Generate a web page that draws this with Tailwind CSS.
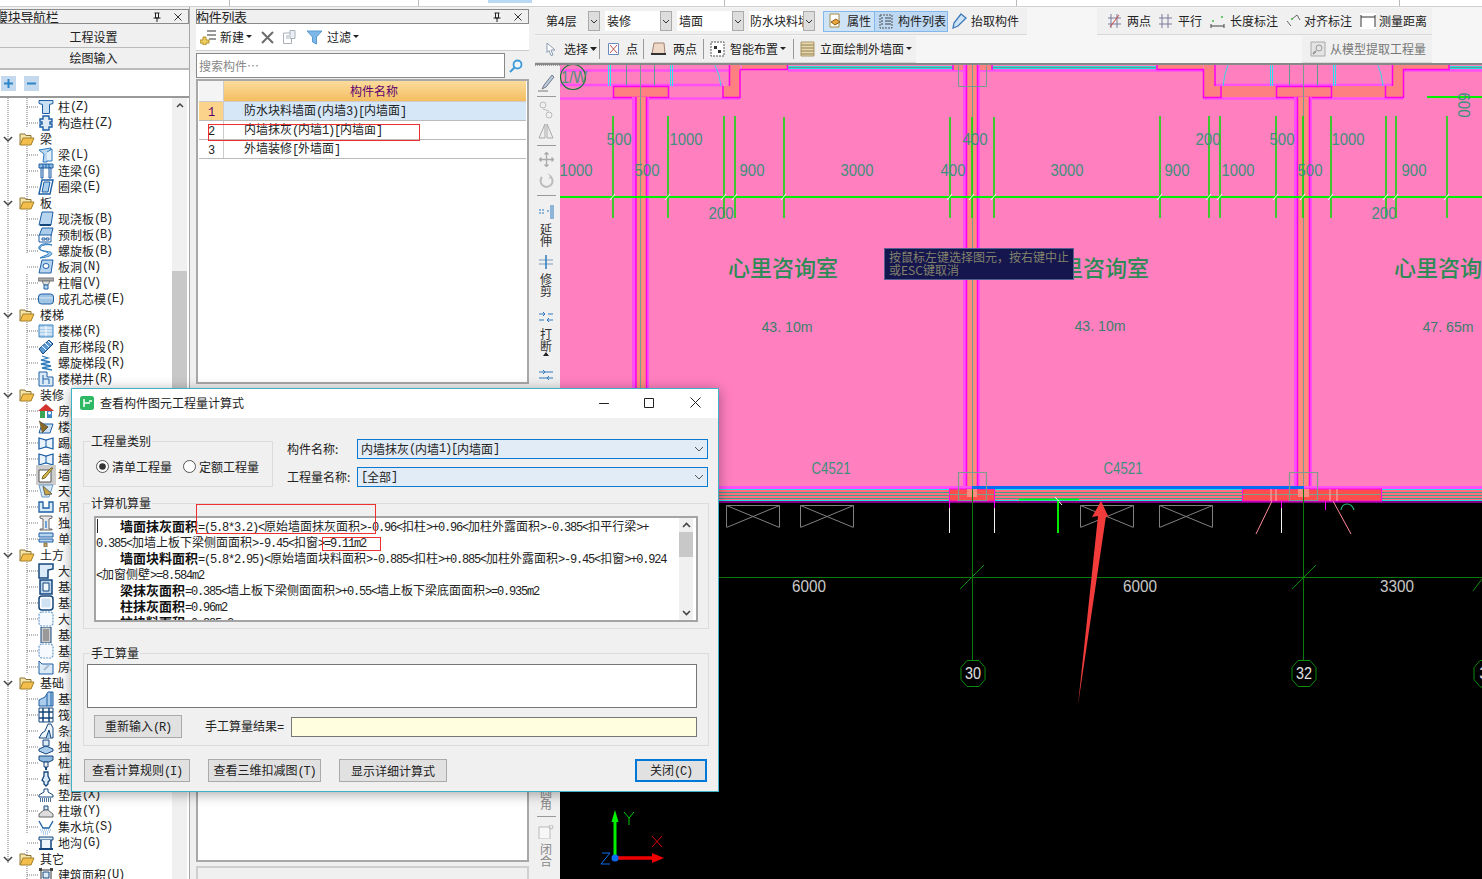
<!DOCTYPE html>
<html lang="zh"><head><meta charset="utf-8"><title>GCL</title>
<script src="https://cdn.jsdelivr.net/npm/@tailwindcss/browser@4"></script></head>
<body class="relative w-[1482px] h-[879px] overflow-hidden bg-[#f0f0f0] text-[12px] leading-4 text-[#222] font-['Noto_Sans_CJK_SC','Liberation_Sans',sans-serif] [&_i]:not-italic [&_i]:font-['Liberation_Mono'] [&_i]:text-[12px] [&_i]:tracking-[-1.2px]">
<svg class="hidden">
<symbol id="fold" viewBox="0 0 16 16"><path d="M1 14V3h5l1 1.500h5V7" fill="#f6e3a8" stroke="#8a7434"/><path d="M1 14l3-7h11l-3 7z" fill="#f2bd4a" stroke="#a5812d"/></symbol>
<symbol id="chev" viewBox="0 0 10 10"><path d="M1 3l4 4 4-4" fill="none" stroke="#444" stroke-width="1.500"/></symbol>
<symbol id="col" viewBox="0 0 16 16"><path d="M1 1.500h14v3l-3.500 1v9h-7v-9L1 4.500z" fill="#c9dff2" stroke="#1c5fa5"/></symbol>
<symbol id="gz" viewBox="0 0 16 16"><path d="M5 1h6v3h3v3h-2v2h2v3h-3v3H5v-3H2V9h2V7H2V4h3z" fill="#dfeaf5" stroke="#1c5fa5" stroke-width="1.400"/></symbol>
<symbol id="beam" viewBox="0 0 16 16"><path d="M1 3l12-2-2 5-2 9H5L6 7z" fill="#bcd8f0" stroke="#2b7bbf"/><path d="M9 5l5-3v12H9" fill="#e3f0fa" stroke="#2b7bbf"/></symbol>
<symbol id="lb" viewBox="0 0 16 16"><path d="M1 1h14v4H1z" fill="#8fbbe0" stroke="#1c5fa5"/><path d="M3 5h2v10H3zM11 5h2v10h-2z" fill="#dfeaf5" stroke="#1c5fa5"/><path d="M5 1v4M8 1v4M11 1v4" stroke="#1c5fa5"/></symbol>
<symbol id="ring" viewBox="0 0 16 16"><path d="M4 1h11l-3 14H1z" fill="#fff" stroke="#1c5fa5" stroke-width="1.400"/><path d="M6 3h6l-2 10H4z" fill="#a9cdea" stroke="#1c5fa5"/></symbol>
<symbol id="slab" viewBox="0 0 16 16"><path d="M4 1h11l-2 13H1z" fill="#b7d5ef" stroke="#1c5fa5"/><path d="M2 14h11" stroke="#14467c" stroke-width="2"/></symbol>
<symbol id="pre" viewBox="0 0 16 16"><path d="M4 1h11l-2 8H1z" fill="#a9cdea" stroke="#1c5fa5"/><path d="M1 8h12v7H1z" fill="#fff" stroke="#1c5fa5"/><path d="M4 11h3v2H4zM8 11h3v2H8z" fill="none" stroke="#1c5fa5"/></symbol>
<symbol id="spi" viewBox="0 0 16 16"><path d="M14 2C8 1 3 2 2 5s6 3 10 4 2 5-10 6c5-3 9-3 8-5S-1 8 1 4s8-4 13-2z" fill="#9dc8ea" stroke="#2b7bbf"/></symbol>
<symbol id="hole" viewBox="0 0 16 16"><path d="M4 1h11l-2 13H1z" fill="#b7d5ef" stroke="#1c5fa5"/><ellipse cx="8" cy="7" rx="3" ry="2.500" fill="#fff" stroke="#1c5fa5"/></symbol>
<symbol id="cap" viewBox="0 0 16 16"><path d="M0 3h16v3H0z" fill="#aaa" stroke="#777"/><path d="M4 6h8l-2 4H6z" fill="#ddd" stroke="#777"/><path d="M6 10h4v4H6z" fill="#bcd6ee" stroke="#1c5fa5"/></symbol>
<symbol id="core" viewBox="0 0 16 16"><rect x="0.500" y="3" width="15" height="10" rx="3" fill="#9fc4e4" stroke="#1c5fa5"/><path d="M1 7h14" stroke="#d8e8f5"/></symbol>
<symbol id="st" viewBox="0 0 16 16"><path d="M1 2h14v12H1z" fill="#a9cdea"/><path d="M1 5h14M1 8h14M1 11h14M8 2v12" stroke="#fff"/><path d="M1 2h14v12H1z" fill="none" stroke="#3c86c5"/></symbol>
<symbol id="run" viewBox="0 0 16 16"><path d="M1 10L11 1l4 4-10 10z" fill="#5a9bd6" stroke="#14467c"/><path d="M4 7l4 4M7 4l4 4M10 2l3 3" stroke="#fff"/></symbol>
<symbol id="spr" viewBox="0 0 16 16"><path d="M4 1l6 2-7 2 9 2-9 2 10 2-9 2 10 2" fill="none" stroke="#2b7bbf" stroke-width="1.300"/></symbol>
<symbol id="well" viewBox="0 0 16 16"><path d="M1 1h8v5h6v9H1z" fill="#dbeaf7" stroke="#1c5fa5"/><path d="M5 4v9M5 8h6v5" fill="none" stroke="#1c5fa5"/></symbol>
<symbol id="room" viewBox="0 0 16 16"><path d="M8 1L0 8h16z" fill="#d3342e"/><path d="M2 8h5v7H2z" fill="#3aa655"/><path d="M9 8h5v7H9z" fill="#3c86c5"/><circle cx="11.500" cy="10" r="1.500" fill="#fff"/></symbol>
<symbol id="flo" viewBox="0 0 16 16"><path d="M1 14l3-9h11l-3 9z" fill="#cfe2f3" stroke="#1c5fa5"/><path d="M1 2l9 6-6 6" fill="#8a6a2b" stroke="#554"/></symbol>
<symbol id="wl" viewBox="0 0 16 16"><path d="M1 3l7 2 7-2v11l-7-2-7 2z" fill="#eaf3fb" stroke="#1c5fa5" stroke-width="1.300"/><path d="M8 5v7" stroke="#1c5fa5"/></symbol>
<symbol id="pnt" viewBox="0 0 16 16"><path d="M1 3h12v12H1z" fill="#fff" stroke="#555"/><path d="M15 1L7 11l-3 1 1-3 8-8z" fill="#d8b84a" stroke="#7b6a25"/></symbol>
<symbol id="cei" viewBox="0 0 16 16"><path d="M1 2h14l-4 12H4z" fill="#d8e8f5" stroke="#6a9bc8"/><path d="M5 3l9 8-7 1z" fill="#c8a548" stroke="#665"/></symbol>
<symbol id="han" viewBox="0 0 16 16"><path d="M1 3h4v6h6V3h4v10H1z" fill="#dbeaf7" stroke="#1c5fa5" stroke-width="1.300"/></symbol>
<symbol id="ind" viewBox="0 0 16 16"><path d="M2 1h12v2l-3 1v10h3v1H2v-1h3V4L2 3z" fill="#e8e8e8" stroke="#666"/><path d="M7 6h2v7H7z" fill="#6aa4d8"/></symbol>
<symbol id="sng" viewBox="0 0 16 16"><path d="M1 2h14v4H1zM1 8h14v3H1z" fill="#b7d5ef" stroke="#1c5fa5"/><path d="M6 12h3v4H6z" fill="#d4a35a" stroke="#775"/></symbol>
<symbol id="l1" viewBox="0 0 16 16"><path d="M1 1h14v5l-5 1v8H1z" fill="#dbeaf7" stroke="#14467c" stroke-width="1.500"/></symbol>
<symbol id="f1" viewBox="0 0 16 16"><path d="M2 1h12v14H2z" fill="#bcd6ee" stroke="#14467c" stroke-width="1.500"/><path d="M5 4h6v8H5z" fill="#eef5fb" stroke="#14467c"/></symbol>
<symbol id="f2" viewBox="0 0 16 16"><rect x="1" y="1" width="14" height="14" rx="3" fill="#fff" stroke="#14467c" stroke-width="1.500"/><rect x="3.500" y="3.500" width="9" height="9" fill="#cfe2f3"/></symbol>
<symbol id="f3" viewBox="0 0 16 16"><rect x="1" y="1" width="14" height="14" rx="3" fill="#f6fafe" stroke="#6a9bc8" stroke-width="1.200" stroke-dasharray="2 1"/></symbol>
<symbol id="f4" viewBox="0 0 16 16"><path d="M3 0h10v16H3z" fill="#ccc" stroke="#14467c"/><path d="M5 2h6v12H5z" fill="#999"/></symbol>
<symbol id="fd" viewBox="0 0 16 16"><path d="M1 2l3 3h11v10H1z" fill="#dbeaf7" stroke="#1c5fa5"/><path d="M6 11l5-5" stroke="#a9bbd0" stroke-width="2"/></symbol>
<symbol id="b1" viewBox="0 0 16 16"><path d="M1 15V9l6-3 3-5h5v14z" fill="#a9cdea" stroke="#1c5fa5"/><path d="M9 3v12M13 1v14" stroke="#1c5fa5"/></symbol>
<symbol id="b2" viewBox="0 0 16 16"><path d="M1 1h14v14H1z" fill="#fff" stroke="#14467c"/><path d="M1 5h14M1 11h14M5 1v14M11 1v14" stroke="#14467c" stroke-width="1.500"/></symbol>
<symbol id="b3" viewBox="0 0 16 16"><path d="M1 15l3-5 3-2 3-7h3l2 4v10z" fill="#eef5fb" stroke="#14467c"/><path d="M8 15l3-8 2 8" fill="#a9cdea" stroke="#14467c"/></symbol>
<symbol id="b4" viewBox="0 0 16 16"><path d="M1 10l7-3 7 3v2l-7 3-7-3z" fill="#a9cdea" stroke="#14467c"/><path d="M5 1h6v6H5z" fill="#dbeaf7" stroke="#14467c"/></symbol>
<symbol id="b5" viewBox="0 0 16 16"><path d="M1 1h14v4l-4 2H5L1 5z" fill="#8fb8de" stroke="#14467c"/><path d="M6 7h4v5H6z" fill="#eee" stroke="#14467c"/><path d="M7 12h2v3H7z" fill="#14467c"/></symbol>
<symbol id="b6" viewBox="0 0 16 16"><path d="M6 1h4v4l2 4-2 2v2l-2 2-2-2v-2L4 9l2-4z" fill="#dbeaf7" stroke="#14467c" stroke-width="1.300"/></symbol>
<symbol id="b7" viewBox="0 0 16 16"><path d="M6 2h4v3l5 3v2H1V8l5-3z" fill="#fff" stroke="#14467c"/><path d="M2 12h12M2 14h12" stroke="#14467c" stroke-dasharray="1 1" stroke-width="1.500"/></symbol>
<symbol id="b8" viewBox="0 0 16 16"><path d="M6 3h4v4H6z" fill="#dbeaf7" stroke="#14467c"/><path d="M1 11l5-4h4l5 4v3H1z" fill="#ddd" stroke="#666"/></symbol>
<symbol id="b9" viewBox="0 0 16 16"><path d="M1 2l4 7h6l4-7" fill="none" stroke="#1c5fa5" stroke-width="1.300"/><path d="M2 11h12M3 13h10M5 15h6" stroke="#6aa4d8" stroke-dasharray="1 1"/></symbol>
<symbol id="b0" viewBox="0 0 16 16"><path d="M1 2h14v3H1z" fill="#dbeaf7" stroke="#14467c"/><path d="M3 5v9h10V5" fill="#eef5fb" stroke="#14467c" stroke-width="1.500"/><path d="M1 14h14" stroke="#14467c" stroke-width="2"/></symbol>
<symbol id="ar" viewBox="0 0 16 16"><path d="M3 3h10v10H3z" fill="#fff" stroke="#333"/><path d="M5 5h6v6H5z" fill="#dbeaf7" stroke="#14467c"/><path d="M1 1h3v3H1zM12 1h3v3h-3z" fill="#444"/></symbol>
</svg>

<!-- top strip -->
<div class="flex h-[7px] border-b border-[#d0d0d0] bg-white">
  <div class="w-[230px] border-r border-[#bbb]"></div><div class="w-[189px] border-r border-[#bbb]"></div><div class="w-[69px]"></div><div class="w-[44px] h-[3px] bg-[#b8d8f4]"></div><div class="w-[193px] border-r border-[#bbb]"></div><div class="w-[292px] border-r border-[#bbb]"></div><div class="w-[383px] border-r border-[#bbb]"></div>
</div>

<div class="flex h-[872px]">
  <!-- navigation panel -->
  <aside class="flex w-[190px] shrink-0 flex-col border-r border-[#a8a8a8] bg-[#f0f0f0] pt-[2px]">
    <div class="flex h-[15px] items-center overflow-hidden border border-[#8a8a8a] pr-1">
      <span class="-ml-[6px] whitespace-nowrap text-[13px] tracking-[-0.3px]">模块导航栏</span>
      <svg class="ml-auto mr-[13px]" width="8" height="10" viewBox="0 0 8 10"><path d="M1.500 1h5M2.500 1v5h3V1M0.500 6h7M4 6v4" fill="none" stroke="#222"/></svg>
      <svg class="mr-[2px]" width="8" height="8" viewBox="0 0 8 8"><path d="M0.500 0.500l7 7M7.500 0.500l-7 7" stroke="#333"/></svg>
    </div>
    <button class="mt-[2px] h-[22px] border-b border-[#bbb] pr-[2px] text-center">工程设置</button>
    <button class="h-[22px] border-b-2 border-[#bbb] pr-[2px] text-center">绘图输入</button>
    <div class="flex h-[26px] items-center gap-[8px] bg-white pl-[1px]">
      <svg width="15" height="15" viewBox="0 0 15 15"><rect width="15" height="15" fill="#c5d9ee"/><path d="M3 7.500h9M7.500 3v9" stroke="#2d86c9" stroke-width="2"/></svg>
      <svg width="15" height="15" viewBox="0 0 15 15"><rect width="15" height="15" fill="#c5d9ee"/><path d="M3 7.500h9" stroke="#2d86c9" stroke-width="2"/></svg>
    </div>
    <div class="relative flex-1 overflow-hidden border-t-2 border-[#999] bg-white pt-[1px]">
      <svg class="absolute left-0 top-0" width="40" height="790"><path d="M8 0V765M27 0V30M27 48V156 M27 176V288 M27 304V400 M27 320V400 M27 400V575 M27 592V735M27 752V790M27 9h11M27 25h11M27 57h11M27 73h11M27 89h11M27 121h11M27 137h11M27 153h11M27 169h11M27 185h11M27 201h11M27 233h11M27 249h11M27 265h11M27 281h11M27 313h11M27 329h11M27 345h11M27 361h11M27 377h11M27 393h11M27 409h11M27 425h11M27 441h11M27 473h11M27 489h11M27 505h11M27 521h11M27 537h11M27 553h11M27 569h11M27 601h11M27 617h11M27 633h11M27 649h11M27 665h11M27 681h11M27 697h11M27 713h11M27 729h11M27 745h11M27 777h11" fill="none" stroke="#777" stroke-dasharray="1 1"/></svg>
      <div class="relative w-[172px]">
        <div class="flex h-4 items-center pl-[38px]"><svg class="mr-1 size-4"><use href="#col"/></svg>柱<i>(Z)</i></div>
        <div class="flex h-4 items-center pl-[38px]"><svg class="mr-1 size-4"><use href="#gz"/></svg>构造柱<i>(Z)</i></div>
        <div class="flex h-4 items-center pl-[3px]"><svg class="size-[10px]"><use href="#chev"/></svg><svg class="ml-[6px] size-4"><use href="#fold"/></svg><span class="ml-[5px]">梁</span></div>
        <div class="flex h-4 items-center pl-[38px]"><svg class="mr-1 size-4"><use href="#beam"/></svg>梁<i>(L)</i></div>
        <div class="flex h-4 items-center pl-[38px]"><svg class="mr-1 size-4"><use href="#lb"/></svg>连梁<i>(G)</i></div>
        <div class="flex h-4 items-center pl-[38px]"><svg class="mr-1 size-4"><use href="#ring"/></svg>圈梁<i>(E)</i></div>
        <div class="flex h-4 items-center pl-[3px]"><svg class="size-[10px]"><use href="#chev"/></svg><svg class="ml-[6px] size-4"><use href="#fold"/></svg><span class="ml-[5px]">板</span></div>
        <div class="flex h-4 items-center pl-[38px]"><svg class="mr-1 size-4"><use href="#slab"/></svg>现浇板<i>(B)</i></div>
        <div class="flex h-4 items-center pl-[38px]"><svg class="mr-1 size-4"><use href="#pre"/></svg>预制板<i>(B)</i></div>
        <div class="flex h-4 items-center pl-[38px]"><svg class="mr-1 size-4"><use href="#spi"/></svg>螺旋板<i>(B)</i></div>
        <div class="flex h-4 items-center pl-[38px]"><svg class="mr-1 size-4"><use href="#hole"/></svg>板洞<i>(N)</i></div>
        <div class="flex h-4 items-center pl-[38px]"><svg class="mr-1 size-4"><use href="#cap"/></svg>柱帽<i>(V)</i></div>
        <div class="flex h-4 items-center pl-[38px]"><svg class="mr-1 size-4"><use href="#core"/></svg>成孔芯模<i>(E)</i></div>
        <div class="flex h-4 items-center pl-[3px]"><svg class="size-[10px]"><use href="#chev"/></svg><svg class="ml-[6px] size-4"><use href="#fold"/></svg><span class="ml-[5px]">楼梯</span></div>
        <div class="flex h-4 items-center pl-[38px]"><svg class="mr-1 size-4"><use href="#st"/></svg>楼梯<i>(R)</i></div>
        <div class="flex h-4 items-center pl-[38px]"><svg class="mr-1 size-4"><use href="#run"/></svg>直形梯段<i>(R)</i></div>
        <div class="flex h-4 items-center pl-[38px]"><svg class="mr-1 size-4"><use href="#spr"/></svg>螺旋梯段<i>(R)</i></div>
        <div class="flex h-4 items-center pl-[38px]"><svg class="mr-1 size-4"><use href="#well"/></svg>楼梯井<i>(R)</i></div>
        <div class="flex h-4 items-center pl-[3px]"><svg class="size-[10px]"><use href="#chev"/></svg><svg class="ml-[6px] size-4"><use href="#fold"/></svg><span class="ml-[5px]">装修</span></div>
        <div class="flex h-4 items-center pl-[38px]"><svg class="mr-1 size-4"><use href="#room"/></svg>房间<i>(F)</i></div>
        <div class="flex h-4 items-center pl-[38px]"><svg class="mr-1 size-4"><use href="#flo"/></svg>楼地面<i>(V)</i></div>
        <div class="flex h-4 items-center pl-[38px]"><svg class="mr-1 size-4"><use href="#wl"/></svg>踢脚<i>(S)</i></div>
        <div class="flex h-4 items-center pl-[38px]"><svg class="mr-1 size-4"><use href="#wl"/></svg>墙裙<i>(U)</i></div>
        <div class="flex h-4 items-center pl-[38px]"><svg class="mr-1 size-4 bg-[#ccc] outline-2 outline-[#ccc]"><use href="#pnt"/></svg>墙面<i>(W)</i></div>
        <div class="flex h-4 items-center pl-[38px]"><svg class="mr-1 size-4"><use href="#cei"/></svg>天棚<i>(P)</i></div>
        <div class="flex h-4 items-center pl-[38px]"><svg class="mr-1 size-4"><use href="#han"/></svg>吊顶<i>(K)</i></div>
        <div class="flex h-4 items-center pl-[38px]"><svg class="mr-1 size-4"><use href="#ind"/></svg>独立柱装修</div>
        <div class="flex h-4 items-center pl-[38px]"><svg class="mr-1 size-4"><use href="#sng"/></svg>单梁装修</div>
        <div class="flex h-4 items-center pl-[3px]"><svg class="size-[10px]"><use href="#chev"/></svg><svg class="ml-[6px] size-4"><use href="#fold"/></svg><span class="ml-[5px]">土方</span></div>
        <div class="flex h-4 items-center pl-[38px]"><svg class="mr-1 size-4"><use href="#l1"/></svg>大开挖土方</div>
        <div class="flex h-4 items-center pl-[38px]"><svg class="mr-1 size-4"><use href="#f1"/></svg>基槽土方</div>
        <div class="flex h-4 items-center pl-[38px]"><svg class="mr-1 size-4"><use href="#f2"/></svg>基坑土方</div>
        <div class="flex h-4 items-center pl-[38px]"><svg class="mr-1 size-4"><use href="#f3"/></svg>大开挖灰土</div>
        <div class="flex h-4 items-center pl-[38px]"><svg class="mr-1 size-4"><use href="#f4"/></svg>基槽灰土</div>
        <div class="flex h-4 items-center pl-[38px]"><svg class="mr-1 size-4"><use href="#f3"/></svg>基坑灰土</div>
        <div class="flex h-4 items-center pl-[38px]"><svg class="mr-1 size-4"><use href="#fd"/></svg>房心回填</div>
        <div class="flex h-4 items-center pl-[3px]"><svg class="size-[10px]"><use href="#chev"/></svg><svg class="ml-[6px] size-4"><use href="#fold"/></svg><span class="ml-[5px]">基础</span></div>
        <div class="flex h-4 items-center pl-[38px]"><svg class="mr-1 size-4"><use href="#b1"/></svg>基础梁</div>
        <div class="flex h-4 items-center pl-[38px]"><svg class="mr-1 size-4"><use href="#b2"/></svg>筏板基础</div>
        <div class="flex h-4 items-center pl-[38px]"><svg class="mr-1 size-4"><use href="#b3"/></svg>条形基础</div>
        <div class="flex h-4 items-center pl-[38px]"><svg class="mr-1 size-4"><use href="#b4"/></svg>独立基础</div>
        <div class="flex h-4 items-center pl-[38px]"><svg class="mr-1 size-4"><use href="#b5"/></svg>桩承台</div>
        <div class="flex h-4 items-center pl-[38px]"><svg class="mr-1 size-4"><use href="#b6"/></svg>桩</div>
        <div class="flex h-4 items-center pl-[38px]"><svg class="mr-1 size-4"><use href="#b7"/></svg>垫层<i>(X)</i></div>
        <div class="flex h-4 items-center pl-[38px]"><svg class="mr-1 size-4"><use href="#b8"/></svg>柱墩<i>(Y)</i></div>
        <div class="flex h-4 items-center pl-[38px]"><svg class="mr-1 size-4"><use href="#b9"/></svg>集水坑<i>(S)</i></div>
        <div class="flex h-4 items-center pl-[38px]"><svg class="mr-1 size-4"><use href="#b0"/></svg>地沟<i>(G)</i></div>
        <div class="flex h-4 items-center pl-[3px]"><svg class="size-[10px]"><use href="#chev"/></svg><svg class="ml-[6px] size-4"><use href="#fold"/></svg><span class="ml-[5px]">其它</span></div>
        <div class="flex h-4 items-center pl-[38px]"><svg class="mr-1 size-4"><use href="#ar"/></svg>建筑面积<i>(U)</i></div>
      </div>
      <!-- tree scrollbar -->
      <div class="absolute right-[2px] top-0 bottom-0 flex w-[15px] flex-col items-center bg-[#f0f0f0] pt-[2px]">
        <svg width="10" height="10" viewBox="0 0 10 10"><path d="M2 7l3-3 3 3" fill="none" stroke="#444" stroke-width="1.500"/></svg>
        <div class="mt-[161px] h-[340px] w-full bg-[#c8c8c8]"></div>
      </div>
    </div>
  </aside>

  <!-- component list panel -->
  <section class="flex w-[340px] shrink-0 flex-col pl-[6px] pr-[1px] pt-[2px]">
    <div class="flex h-[15px] items-center overflow-hidden border border-[#8a8a8a] pr-1">
      <span class="-ml-px text-[13px] tracking-[-0.3px]">构件列表</span>
      <svg class="ml-auto mr-[13px]" width="8" height="10" viewBox="0 0 8 10"><path d="M1.500 1h5M2.500 1v5h3V1M0.500 6h7M4 6v4" fill="none" stroke="#222"/></svg>
      <svg class="mr-[2px]" width="8" height="8" viewBox="0 0 8 8"><path d="M0.500 0.500l7 7M7.500 0.500l-7 7" stroke="#333"/></svg>
    </div>
    <div class="flex h-[27px] items-center border-b border-[#ccc] bg-white pl-[4px]">
      <svg width="16" height="16" viewBox="0 0 16 16"><path d="M7 2h9M7 6h9M9 10h7" stroke="#777" stroke-width="1.500"/><path d="M3 8h3v3h3v3H6v2H3v-2H0v-3h3z" fill="#f0cf60" stroke="#b08f2a"/></svg>
      <span class="ml-[4px]">新建</span><svg class="ml-[2px]" width="6" height="4"><path d="M0 0h6L3 3z" fill="#222"/></svg>
      <svg class="ml-[9px]" width="13" height="13" viewBox="0 0 13 13"><path d="M1 1l11 11M12 1L1 12" stroke="#6c6c6c" stroke-width="2"/></svg>
      <svg class="ml-[9px]" width="16" height="14" viewBox="0 0 16 14"><path d="M0.500 3h8v10.500h-8z" fill="#fff" stroke="#a9b2bb"/><path d="M7 0.500h5v8H7z" fill="#eaf0f6" stroke="#a9b2bb"/><path d="M3 8h3M3 6h3" stroke="#a9b2bb"/></svg>
      <svg class="ml-[8px]" width="15" height="15" viewBox="0 0 15 15"><path d="M0 1h15L9.500 7v7l-4-2V7z" fill="#7db7e8" stroke="#5a9bd0"/></svg>
      <span class="ml-[5px]">过滤</span><svg class="ml-[2px]" width="6" height="4"><path d="M0 0h6L3 3z" fill="#222"/></svg>
    </div>
    <div class="mt-[2px] flex h-[25px] bg-[#f0f0f0] pr-[2px]">
      <div class="flex flex-1 items-center border border-[#888] bg-white pl-[2px] text-[#888]">搜索构件…</div>
      <div class="flex w-[22px] items-center justify-center"><svg width="14" height="14" viewBox="0 0 14 14"><circle cx="8.500" cy="5.500" r="4" fill="#eef6fc" stroke="#3d9ad8" stroke-width="1.800"/><path d="M5.500 8.500L1 13" stroke="#3d9ad8" stroke-width="2"/></svg></div>
    </div>
    <div class="mt-[1px] h-[305px] border-2 border-[#a8a8a8] bg-white px-px">
      <div class="flex h-[21px] border-b border-[#ccc]"><div class="w-[25px] border-r border-[#ccc] bg-[#f4f4f4]"></div><div class="flex-1 bg-linear-to-b from-[#fbdc9c] to-[#f4bd60] pr-[2px] text-center leading-[20px] text-[#600070]">构件名称</div></div>
      <div class="flex h-[19px] items-center border-b border-[#bbb]"><div class="h-full w-[25px] border-r border-[#ccc] bg-[#fbd38a] pl-[9px] leading-[18px] text-[#5a0070]"><i>1</i></div><div class="flex h-full flex-1 items-center bg-[#d6e8f8] pl-[20px] leading-[16px]"><span>防水块料墙面<i>(</i>内墙<i>3)[</i>内墙面<i>]</i></span></div></div>
      <div class="flex h-[19px] items-center border-b border-[#bbb]"><div class="h-full w-[25px] border-r border-[#ccc] pl-[9px] leading-[18px]"><i>2</i></div><div class="pl-[20px]">内墙抹灰<i>(</i>内墙<i>1)[</i>内墙面<i>]</i></div></div>
      <div class="flex h-[19px] items-center border-b border-[#bbb]"><div class="h-full w-[25px] border-r border-[#ccc] pl-[9px] leading-[18px]"><i>3</i></div><div class="pl-[20px]">外墙装修<i>[</i>外墙面<i>]</i></div></div>
    </div>
    <div class="mt-[407px] h-[71px] border-2 border-t-0 border-[#a8a8a8] bg-white"></div>
    <div class="mt-[4px] flex-1 border-2 border-b-0 border-[#cfcfcf]"></div>
  </section>

  <!-- toolbars + canvas -->
  <div class="flex min-w-0 flex-1 flex-col pl-[5px]">
    <div class="flex h-[58px] flex-col border-b-2 border-[#888] bg-[#f6f6f6] text-[12px]">
      <div class="flex h-[28px] pt-[1px]">
        <div class="flex w-[492px] items-center border-b border-[#d8d8d8] bg-[#f0f0f0] pl-[11px]">
          <span class="w-[42px]">第4层</span><span class="flex h-[20px] w-[12px] items-center justify-center border border-[#aaa] bg-[#ddd]"><svg width="8" height="5"><path d="M1 1l3 3 3-3" fill="none" stroke="#333"/></svg></span>
          <span class="ml-[5px] flex h-[20px] w-[55px] items-center bg-white pl-[2px]">装修</span><span class="flex h-[20px] w-[12px] items-center justify-center border border-[#aaa] bg-[#ddd]"><svg width="8" height="5"><path d="M1 1l3 3 3-3" fill="none" stroke="#333"/></svg></span>
          <span class="ml-[5px] flex h-[20px] w-[55px] items-center bg-white pl-[2px]">墙面</span><span class="flex h-[20px] w-[12px] items-center justify-center border border-[#aaa] bg-[#ddd]"><svg width="8" height="5"><path d="M1 1l3 3 3-3" fill="none" stroke="#333"/></svg></span>
          <span class="ml-[5px] flex h-[20px] w-[54px] items-center overflow-hidden whitespace-nowrap bg-white pl-[1px]">防水块料墙面</span><span class="flex h-[20px] w-[12px] items-center justify-center border border-[#aaa] bg-[#ddd]"><svg width="8" height="5"><path d="M1 1l3 3 3-3" fill="none" stroke="#333"/></svg></span>
          <span class="ml-[8px] flex h-[21px] w-[51px] items-center gap-[4px] border border-r-0 border-[#84b8ea] bg-[#cfe3f6] pl-[4px]"><svg width="15" height="16" viewBox="0 0 15 16"><path d="M2 1h9v13H2z" fill="#fff" stroke="#a58a45"/><path d="M3 9l5-3 4 3-5 3z" fill="#e9a63a" stroke="#8a5a18"/></svg>属性</span>
          <span class="flex h-[21px] w-[74px] items-center gap-[5px] whitespace-nowrap border border-[#84b8ea] bg-[#bcd8f2] pl-[4px]"><svg class="shrink-0" width="14" height="15" viewBox="0 0 14 15"><path d="M1 1h12v13H1z" fill="none" stroke="#555" stroke-dasharray="2 1"/><path d="M6 4h6M6 7h6M6 10h6M2 4h2M2 7h2M2 10h2" stroke="#444"/></svg>构件列表</span>
          <span class="ml-[4px] flex items-center gap-[4px]"><svg width="15" height="16" viewBox="0 0 15 16"><path d="M9 1l5 4-8 8-5 2 1-5z" fill="#cfe3f6" stroke="#3d7ab8" stroke-width="1.300"/></svg>抬取构件</span>
        </div>
        <div class="ml-[70px] flex w-[335px] items-center gap-[6px] border-b border-[#d8d8d8] bg-[#f0f0f0] pl-[11px]">
          <span class="flex items-center gap-[6px]"><svg width="13" height="14" viewBox="0 0 13 14"><path d="M3 0v14M9 0v14M0 4h13M0 10h13" stroke="#7a7a9a"/><path d="M2 13L11 1" stroke="#d04040"/></svg>两点</span>
          <span class="ml-[2px] flex items-center gap-[6px]"><svg width="13" height="14" viewBox="0 0 13 14"><path d="M3 0v14M9 0v14M0 4h13M0 10h13" stroke="#7a7a9a"/></svg>平行</span>
          <span class="ml-[2px] flex items-center gap-[5px]"><svg width="15" height="14" viewBox="0 0 15 14"><path d="M1 10v4M14 10v4M1 12h13" stroke="#444"/><circle cx="3" cy="7" r="1" fill="#3cb43c"/><circle cx="12" cy="3" r="1" fill="#3cb43c"/></svg>长度标注</span>
          <span class="ml-[2px] flex items-center gap-[3px]"><svg width="15" height="14" viewBox="0 0 15 14"><path d="M1 7l4 5M6 5l5-4 3 5" fill="none" stroke="#666"/><circle cx="6" cy="5" r="1" fill="#3cb43c"/></svg>对齐标注</span>
          <span class="ml-[2px] flex items-center gap-[3px]"><svg class="bg-white" width="16" height="16" viewBox="0 0 16 16"><path d="M1 2v12M15 2v12M1 4h14" stroke="#333"/></svg>测量距离</span>
        </div>
      </div>
      <div class="flex h-[28px] pt-[1px]">
        <div class="flex w-[381px] items-center border-b border-[#d8d8d8] bg-[#f0f0f0] pl-[11px]">
          <svg width="10" height="14" viewBox="0 0 10 14"><path d="M1 1l8 7H5l2 5-2 .5-2-5-2 2z" fill="#fff" stroke="#8a9ab0"/></svg>
          <span class="ml-[8px]">选择</span><svg class="ml-[2px]" width="7" height="4"><path d="M0 0h7L3.500 4z" fill="#222"/></svg>
          <span class="ml-[2px] h-[20px] border-l border-[#999]"></span>
          <svg class="ml-[8px]" width="11" height="12" viewBox="0 0 11 12"><path d="M0.500 0.500h10v11h-10z" fill="#fff" stroke="#6a8bbf"/><path d="M2 2l7 8M9 2l-7 8" stroke="#c05050"/></svg>
          <span class="ml-[7px]">点</span>
          <span class="ml-[5px] h-[20px] border-l border-[#999]"></span>
          <svg class="ml-[7px]" width="15" height="14" viewBox="0 0 15 14"><path d="M3 1h10l1 11H1z" fill="#f0d8c8" stroke="#a08070"/><path d="M0 12h15" stroke="#333" stroke-width="2"/></svg>
          <span class="ml-[7px]">两点</span>
          <span class="ml-[6px] h-[20px] border-l border-[#999]"></span>
          <svg class="ml-[6px]" width="15" height="16" viewBox="0 0 15 16"><path d="M1 1h13v14H1z" fill="#fff" stroke="#555" stroke-dasharray="2 1"/><path d="M4 5h3v3H4zM8 9h3v3H8z" fill="#333"/></svg>
          <span class="ml-[5px]">智能布置</span><svg class="ml-[2px]" width="6" height="4"><path d="M0 0h6L3 3z" fill="#222"/></svg>
          <span class="ml-[7px] h-[20px] border-l border-[#999]"></span>
          <svg class="ml-[6px]" width="15" height="16" viewBox="0 0 15 16"><path d="M1 1h13v14H1z" fill="#e8d8b0" stroke="#a89868"/><path d="M1 4h13M1 7h13M1 10h13M1 13h13" stroke="#8f7f4f"/></svg>
          <span class="ml-[5px]">立面绘制外墙面</span><svg class="ml-[2px]" width="6" height="4"><path d="M0 0h6L3 3z" fill="#222"/></svg>
        </div>
        <div class="ml-[386px] flex w-[130px] items-center border-b border-[#d8d8d8] bg-[#f0f0f0] pl-[8px] text-[#777]">
          <svg class="mr-[4px]" width="16" height="16" viewBox="0 0 16 16"><path d="M1 1h14v14H1z" fill="#e4e4e4" stroke="#aaa"/><circle cx="9" cy="7" r="3" fill="none" stroke="#999"/><path d="M6 10l-3 3" stroke="#999" stroke-width="2"/></svg>从模型提取工程量
        </div>
      </div>
    </div>
    <div class="flex flex-1">
      <!-- vertical tools -->
      <div class="flex w-[25px] flex-col items-center border-t border-dotted border-[#999] pr-[3px] pt-[8px] text-[#333]">
        <svg width="18" height="18" viewBox="0 0 18 18"><path d="M15 1L7 11l-2 4 4-2 8-10z" fill="#b8cde0" stroke="#778"/><path d="M1 17h10" stroke="#777"/></svg>
        <div class="my-[4px] h-px w-[19px] bg-[#999]"></div>
        <svg width="16" height="18" viewBox="0 0 16 18"><circle cx="5" cy="4" r="3" fill="none" stroke="#bbb"/><circle cx="11" cy="14" r="3" fill="none" stroke="#bbb"/><path d="M5 8l6 2" stroke="#bbb"/></svg>
        <svg class="mt-[4px]" width="16" height="17" viewBox="0 0 16 17"><path d="M7 1L1 15h6zM9 1l6 14H9z" fill="#eee" stroke="#aaa"/></svg>
        <div class="my-[5px] h-px w-[19px] bg-[#999]"></div>
        <svg class="mt-[1px]" width="15" height="15" viewBox="0 0 15 15"><path d="M7.500 0v15M0 7.500h15M5.500 2.500l2-2 2 2M5.500 12.500l2 2 2-2M2.500 5.500l-2 2 2 2M12.500 5.500l2 2-2 2" fill="none" stroke="#aaa" stroke-width="1.300"/></svg>
        <svg class="mt-[7px]" width="15" height="15" viewBox="0 0 15 15"><path d="M3 3a6 6 0 1 0 8-1" fill="none" stroke="#bbb" stroke-width="2"/><path d="M9 0l3 2-2 3" fill="none" stroke="#bbb"/></svg>
        <div class="my-[6px] h-px w-[19px] bg-[#999]"></div>
        <svg class="mt-[3px]" width="16" height="14" viewBox="0 0 16 14"><path d="M1 5h5M1 8h5M9 6h3" stroke="#2d7ac0" stroke-dasharray="2 1"/><path d="M13 0v14M15 0v14" stroke="#2d7ac0"/></svg>
        <div class="mt-[4px] w-3 text-center leading-[12px]">延伸</div>
        <svg class="mt-[8px]" width="16" height="14" viewBox="0 0 16 14"><path d="M1 5h14M1 9h14" stroke="#7a9ac0"/><path d="M8 0v14" stroke="#2d7ac0" stroke-width="1.500"/></svg>
        <div class="mt-[4px] w-3 text-center leading-[12px]">修剪</div>
        <svg class="mt-[14px]" width="16" height="12" viewBox="0 0 16 12"><path d="M1 3h5M10 3h5M1 9h5M10 9h5M5 1l2 2-2 2M11 7L9 9l2 2" fill="none" stroke="#2d7ac0"/></svg>
        <div class="mt-[5px] w-3 text-center leading-[12px]">打断</div>
        <svg width="6" height="4"><path d="M3 0l3 4H0z" fill="#222"/></svg>
        <svg class="mt-[13px]" width="16" height="12" viewBox="0 0 16 12"><path d="M1 3h14M1 9h14M5 1l2 2-2 2M11 7L9 9l2 2" fill="none" stroke="#2d7ac0"/></svg>
        <div class="mt-auto w-3 text-center leading-[12px] text-[#888]">圆角</div>
        <div class="my-[6px] h-px w-[19px] bg-[#999]"></div>
        <svg class="mt-[2px]" width="16" height="14" viewBox="0 0 16 14"><path d="M1 2h11v12H1z" fill="#f7f7f7" stroke="#bbb"/><circle cx="13" cy="2" r="2" fill="none" stroke="#bbb"/></svg>
        <div class="mb-[12px] mt-[4px] w-3 text-center leading-[12px] text-[#888]">闭合</div>
      </div>
      <!-- CAD canvas -->
      <svg class="block shrink-0 bg-black" width="922" height="814" viewBox="560 65 922 814" font-family="'Liberation Sans',sans-serif">
        <rect x="560" y="65" width="922" height="424" fill="#ff7fbf"/>
        <!-- light magenta halos -->
        <path d="M560 85h163M1210 85h187M560 98.500h180M1203 98.500h200M788 70.500h416M1403 70.500h79M560 70.500h180" stroke="#ff50f5" stroke-width="2.500" fill="none"/>
        <!-- salmon masses -->
        <path d="M560 86h163v11h17V65h-10v21H560zM742 65h45v4h-45zM953 65h39v5h-39zM1157 65h46v4h-46zM1204 65h10v21h171v11h18V65h-10v21h-6v-0H1214V86h7v11h-17zM1403 65h46v4h-46z" fill="#ff8080"/>
        <rect x="1221" y="86" width="164" height="11" fill="#ff8080"/>
        <!-- top stripes -->
        <path d="M560 64.500h0M992 66.500h164M992 68.500h164M1450 66.500h32M1450 68.500h32M940 66.500h13M940 68.500h13M788 66.500h152M788 68.500h152" stroke="#2adfe0"/>
        <path d="M992 67.500h164M788 67.500h165M1450 67.500h32" stroke="#3c9a8c" stroke-width="0.800"/>
        <path d="M608.500 65v21M610.500 65v21M670.500 65v21M672.500 65v21M1270.500 65v21M1272.500 65v21M1333.500 65v21M1335.500 65v21" stroke="#26e6f0"/>
        <path d="M626.500 65v21M654.500 65v21M1289.500 65v21M1317.500 65v21" stroke="#5f9a8c"/>
        <path d="M715 65q5 10 6 21M1228 65q-4 10-5 21M1378 65q4 10 5 21" fill="none" stroke="#30d8e8"/>
        <!-- magenta outlines -->
        <path d="M729.500 65v21M740 70v27.500h-17V86M740 69.500h47.500V65M953 65v5M992 70V65M1157 65v4.500h46.500V97.500h17.500V86M1215 65v21M1392.500 65v21M1385.500 86v11.500h18V69.500h45.500V65" fill="none" stroke="#ff00ee" stroke-width="1.500"/>
        <rect x="613.500" y="86.500" width="55" height="11" fill="#ff8080" stroke="#ff00ee" stroke-width="1.500"/><rect x="1276.500" y="86.500" width="55" height="11" fill="#ff8080" stroke="#ff00ee" stroke-width="1.500"/>
        <!-- vertical walls -->
        <rect x="632" y="97" width="17" height="392" fill="#ff50f5"/><rect x="963" y="65" width="17" height="424" fill="#ff50f5"/><rect x="1294" y="97" width="18" height="392" fill="#ff50f5"/>
        <rect x="636" y="97" width="10" height="392" fill="#ff8a80"/><rect x="967" y="65" width="10" height="424" fill="#ff8a80"/><rect x="1298" y="97" width="11" height="392" fill="#ff8a80"/>
        <path d="M636 97v392M646.500 97v392M966.500 65v424M977.500 65v424M1297.500 97v392M1309.500 97v392" stroke="#ff00ee" stroke-width="1.500"/>
        <path d="M640.500 65v424M972.500 65v424M1303.500 65v424" stroke="#7a9a8c"/>
        <path d="M958.500 65.500v21h28v-21" fill="none" stroke="#7a9a8c"/>
        <!-- dim lines -->
        <path d="M613 116v102M668 116v102M724 116v102M735 116v102M784 117v101M950 117v101M972 117v101M994 117v101M1160 116v102M1209 116v102M1220 116v102M1276 116v102M1303 116v102M1331 116v102M1386 116v102M1396 116v102M1447 116v102" stroke="#00e000" stroke-width="1.500"/>
        <path d="M560 197h922" stroke="#00f000" stroke-width="2"/>
        <path d="M1427 97h55" stroke="#00f000" stroke-width="2"/>
        <path d="M610 200l5-6M665 200l5-6M721 200l5-6M732 200l5-6M781 200l5-6M947 200l5-6M969 200l5-6M991 200l5-6M1157 200l5-6M1206 200l5-6M1217 200l5-6M1273 200l5-6M1300 200l5-6M1328 200l5-6M1383 200l5-6M1393 200l5-6M1444 200l5-6" stroke="#fff"/>
        <g fill="#3f8f7c" font-size="17" text-anchor="middle" lengthAdjust="spacingAndGlyphs">
          <text x="619" y="145" textLength="25" lengthAdjust="spacingAndGlyphs">500</text><text x="686" y="145" textLength="33" lengthAdjust="spacingAndGlyphs">1000</text><text x="975" y="145" textLength="25" lengthAdjust="spacingAndGlyphs">400</text><text x="1208" y="145" textLength="25" lengthAdjust="spacingAndGlyphs">200</text><text x="1282" y="145" textLength="25" lengthAdjust="spacingAndGlyphs">500</text><text x="1348" y="145" textLength="33" lengthAdjust="spacingAndGlyphs">1000</text>
          <text x="576" y="176" textLength="33" lengthAdjust="spacingAndGlyphs">1000</text><text x="647" y="176" textLength="25" lengthAdjust="spacingAndGlyphs">500</text><text x="752" y="176" textLength="25" lengthAdjust="spacingAndGlyphs">900</text><text x="857" y="176" textLength="33" lengthAdjust="spacingAndGlyphs">3000</text><text x="953" y="176" textLength="25" lengthAdjust="spacingAndGlyphs">400</text><text x="1067" y="176" textLength="33" lengthAdjust="spacingAndGlyphs">3000</text><text x="1177" y="176" textLength="25" lengthAdjust="spacingAndGlyphs">900</text><text x="1238" y="176" textLength="33" lengthAdjust="spacingAndGlyphs">1000</text><text x="1310" y="176" textLength="25" lengthAdjust="spacingAndGlyphs">500</text><text x="1414" y="176" textLength="25" lengthAdjust="spacingAndGlyphs">900</text>
          <text x="721" y="219" textLength="25" lengthAdjust="spacingAndGlyphs">200</text><text x="1384" y="219" textLength="25" lengthAdjust="spacingAndGlyphs">200</text>
          <text transform="translate(1458 105) rotate(90)" textLength="25" lengthAdjust="spacingAndGlyphs">600</text>
          <text x="831" y="474" font-size="16" textLength="39" lengthAdjust="spacingAndGlyphs">C4521</text><text x="1123" y="474" font-size="16" textLength="39" lengthAdjust="spacingAndGlyphs">C4521</text>
          <text x="787" y="332" font-size="15" fill="#3a7f6c" textLength="51" lengthAdjust="spacingAndGlyphs">43. 10m</text><text x="1100" y="331" font-size="15" fill="#3a7f6c" textLength="51" lengthAdjust="spacingAndGlyphs">43. 10m</text><text x="1448" y="332" font-size="15" fill="#3a7f6c" textLength="51" lengthAdjust="spacingAndGlyphs">47. 65m</text>
        </g>
        <g fill="#2e8b57" font-size="22" font-family="'Noto Sans CJK SC',sans-serif" font-weight="500">
          <text x="728" y="276">心里咨询室</text><text x="1039" y="276">心里咨询室</text><text x="1394" y="276">心里咨询室</text>
        </g>
        <!-- 1/W bubble -->
        <ellipse cx="573" cy="77" rx="12.500" ry="12.500" fill="none" stroke="#067a30" stroke-width="1.200"/>
        <text x="574" y="83" fill="#4f8f7c" font-size="16" text-anchor="middle" textLength="26" lengthAdjust="spacingAndGlyphs">1/W</text>
        <!-- bottom wall -->
        <rect x="560" y="486" width="922" height="3" fill="#ff50f5"/>
        <rect x="560" y="489" width="922" height="12" fill="#ff6f7f"/>
        <path d="M560 489.500h922M560 500.500h922" stroke="#22e0e8"/><path d="M560 492.500h922M560 495.500h922M560 498.500h922" stroke="#3fa090"/>
        <rect x="560" y="501" width="922" height="2" fill="#800080"/>
        <rect x="949.500" y="489" width="45" height="12" fill="#ff4d4d" stroke="#ff00ee"/><rect x="1242.500" y="489" width="139" height="12" fill="#ff4d4d" stroke="#ff00ee"/>
        <path d="M972 487.500h332" stroke="#0a6cf0" stroke-width="3"/>
        <path d="M949 494.500h45M1242 494.500h139" stroke="#7f9f88"/>
        <rect x="963" y="472" width="17" height="15" fill="#ff50f5" opacity="0"/>
        <path d="M967 489h10v8h-10zM1298 489h11v8h-11z" fill="#ff8a80"/>
        <path d="M1271 489v12M1276 489v12M1330 489v12M1337 489v12" stroke="#ffb0b8"/>
        <path d="M958.500 472.500h28v28h-28zM1289.500 472.500h28v28h-28z" fill="none" stroke="#7f9a8c" stroke-width="1.200"/>
        <path d="M1019 499.500h60" stroke="#00f000" stroke-width="1.500"/>
        <path d="M1055 497l7 8" stroke="#fff"/>
        <!-- window symbols -->
        <path d="M726.500 527V505.500h53V527M726.500 505.500l53 22M779.500 505.500l-53 22M800.500 527V505.500h53V527M800.500 505.500l53 22M853.500 505.500l-53 22M1080.500 527V505.500h53V527M1080.500 505.500l53 22M1133.500 505.500l-53 22M1159.500 527V505.500h53V527M1159.500 505.500l53 22M1212.500 505.500l-53 22" fill="none" stroke="#808080"/>
        <path d="M949.500 501v7M994.500 501v7M1281.500 501v7M1325.500 501v9" stroke="#ff00ff"/>
        <path d="M949.500 508v25M994.500 508v25M1281.500 508v25" stroke="#f4f4f4"/>
        <path d="M1058 501v32" stroke="#00e800" stroke-width="2"/>
        <path d="M1272 501l-16 33M1333 501l18 33" stroke="#ff8a9a"/>
        <path d="M1341 510q1-6 6-6t7 6" fill="none" stroke="#20c080" stroke-width="1.200"/>
        <!-- grid -->
        <path d="M560 577.500h922M972.500 489v171M1303.500 489v171" stroke="#0a7a0a"/>
        <path d="M960 589l24-24M1292 589l24-24M1473 591l9-12" stroke="#0a8a0a"/>
        <g fill="#c8c8c8" font-size="17" text-anchor="middle"><text x="809" y="592" textLength="34" lengthAdjust="spacingAndGlyphs">6000</text><text x="1140" y="592" textLength="34" lengthAdjust="spacingAndGlyphs">6000</text><text x="1397" y="592" textLength="34" lengthAdjust="spacingAndGlyphs">3300</text></g>
        <path d="M967 660.500h12l6 7v12l-6 7h-12l-6-7v-12zM1298 660.500h12l6 7v12l-6 7h-12l-6-7v-12zM1480 660.500h2M1482 687h-2M1480 660.500l-6 7v12l6 7" fill="none" stroke="#0a8a0a"/>
        <g fill="#e0e0e0" font-size="17" text-anchor="middle"><text x="973" y="679" textLength="16" lengthAdjust="spacingAndGlyphs">30</text><text x="1304" y="679" textLength="16" lengthAdjust="spacingAndGlyphs">32</text><text x="1484" y="679">3</text></g>
        <!-- red arrow -->
        <path d="M1101 501L1109 518 1106 516 1078 705 1098 516 1092 517z" fill="#f23c3c"/>
        <!-- axes -->
        <path d="M615 856V820" stroke="#00f000" stroke-width="3"/><path d="M615 810l3.500 12h-7z" fill="#00f000"/>
        <path d="M615 858h41" stroke="#f00000" stroke-width="3.500"/><path d="M664 858l-12 5v-10z" fill="#f00000"/>
        <circle cx="615" cy="858" r="3.500" fill="#0a6cf0"/>
        <g fill="none" stroke-width="1"><path d="M624 812l5 6 5-6M629 818v7" stroke="#00d000"/><path d="M652 836l10 11M662 836l-10 11" stroke="#e00000"/><path d="M602 853h8l-9 11h9" stroke="#0a6cf0"/></g>
      </svg>
    </div>
  </div>
</div>

<!-- tooltip over canvas -->
<div class="absolute left-[884px] top-[248px] h-[32px] w-[190px] border border-[#55608f] bg-[#16164f] pl-[4px] pt-px text-[12px] leading-[13px] text-[#82826a]">按鼠标左键选择图元，按右键中止<br>或ESC键取消</div>

<!-- dialog -->
<div class="absolute left-[71px] top-[388px] h-[404px] w-[648px] border border-[#3fb1c4] bg-[#f0f0f0] shadow-[0_2px_12px_rgba(0,0,0,0.35)]">
  <div class="flex h-[29px] items-center bg-white pb-[2px] pl-[8px]">
    <svg width="14" height="14" viewBox="0 0 14 14"><rect width="14" height="14" rx="2.500" fill="#2fb863"/><path d="M4 3v8M4 7h6M9 5h3" stroke="#fff" stroke-width="1.500" fill="none"/></svg>
    <span class="ml-[6px]">查看构件图元工程量计算式</span>
    <svg class="ml-auto" width="10" height="10" viewBox="0 0 10 10"><path d="M0 5.500h10" stroke="#222"/></svg>
    <svg class="ml-[35px]" width="10" height="10" viewBox="0 0 10 10"><path d="M0.500 0.500h9v9h-9z" fill="none" stroke="#222"/></svg>
    <svg class="ml-[36px] mr-[17px]" width="11" height="11" viewBox="0 0 11 11"><path d="M0.500 0.500l10 10M10.500 0.500l-10 10" stroke="#222"/></svg>
  </div>
  <div class="mt-[21px] flex h-[48px]">
    <div class="relative ml-[11px] mt-[2px] flex h-[46px] w-[190px] items-center border border-[#dcdcdc] pl-[12px] pt-[5px]">
      <span class="absolute -top-[9px] left-[6px] bg-[#f0f0f0] px-px">工程量类别</span>
      <svg width="13" height="13" viewBox="0 0 13 13"><circle cx="6.500" cy="6.500" r="6" fill="#fff" stroke="#555"/><circle cx="6.500" cy="6.500" r="3.300" fill="#333"/></svg>
      <span class="ml-[3px]">清单工程量</span>
      <svg class="ml-[11px]" width="13" height="13" viewBox="0 0 13 13"><circle cx="6.500" cy="6.500" r="6" fill="#fff" stroke="#555"/></svg>
      <span class="ml-[3px]">定额工程量</span>
    </div>
    <div class="ml-[14px] flex w-[421px] flex-col gap-[8px]">
      <div class="flex h-[20px] items-center"><span class="w-[70px]">构件名称:</span><div class="flex h-full flex-1 items-center border border-[#0a7ad0] bg-[#e2ecf6] pl-[3px]">内墙抹灰<i>(</i>内墙<i>1)[</i>内墙面<i>]</i><svg class="ml-auto mr-[3px]" width="10" height="6"><path d="M1 1l4 4 4-4" fill="none" stroke="#555"/></svg></div></div>
      <div class="flex h-[20px] items-center"><span class="w-[70px]">工程量名称:</span><div class="flex h-full flex-1 items-center border border-[#0a7ad0] bg-[#e2ecf6] pl-[3px]"><i>[</i>全部<i>]</i><svg class="ml-auto mr-[3px]" width="10" height="6"><path d="M1 1l4 4 4-4" fill="none" stroke="#555"/></svg></div></div>
    </div>
  </div>
  <div class="relative ml-[11px] mt-[16px] h-[126px] w-[626px] border border-[#dcdcdc] pl-[10px] pt-[12px]">
    <span class="absolute -top-[9px] left-[6px] bg-[#f0f0f0] px-px">计算机算量</span>
    <div class="flex h-[106px] w-[604px] overflow-hidden border-2 border-[#a4a4a4] bg-white">
      <div class="relative flex-1 overflow-hidden whitespace-nowrap text-[#222]">
        <div class="absolute left-[1px] top-[1px] h-[14px] w-px bg-[#222]"></div>
        <div class="h-4 pl-[24px]"><b class="text-[13px] font-bold text-[#111]">墙面抹灰面积</b><i>=(5.8*3.2)&lt;</i>原始墙面抹灰面积<i>&gt;-0.96&lt;</i>扣柱<i>&gt;+0.96&lt;</i>加柱外露面积<i>&gt;-0.385&lt;</i>扣平行梁<i>&gt;+</i></div>
        <div class="h-4"><i>0.385&lt;</i>加墙上板下梁侧面面积<i>&gt;-9.45&lt;</i>扣窗<i>&gt;=9.11m2</i></div>
        <div class="h-4 pl-[24px]"><b class="text-[13px] font-bold text-[#111]">墙面块料面积</b><i>=(5.8*2.95)&lt;</i>原始墙面块料面积<i>&gt;-0.885&lt;</i>扣柱<i>&gt;+0.885&lt;</i>加柱外露面积<i>&gt;-9.45&lt;</i>扣窗<i>&gt;+0.924</i></div>
        <div class="h-4"><i>&lt;</i>加窗侧壁<i>&gt;=8.584m2</i></div>
        <div class="h-4 pl-[24px]"><b class="text-[13px] font-bold text-[#111]">梁抹灰面积</b><i>=0.385&lt;</i>墙上板下梁侧面面积<i>&gt;+0.55&lt;</i>墙上板下梁底面面积<i>&gt;=0.935m2</i></div>
        <div class="h-4 pl-[24px]"><b class="text-[13px] font-bold text-[#111]">柱抹灰面积</b><i>=0.96m2</i></div>
        <div class="h-4 pl-[24px]"><b class="text-[13px] font-bold text-[#111]">柱块料面积</b><i>=0.885m2</i></div>
      </div>
      <div class="mr-[3px] flex w-[14px] flex-col items-center justify-between bg-[#f0f0f0] py-[4px]">
        <svg width="9" height="7"><path d="M1 5l3.500-3.500L8 5" fill="none" stroke="#444" stroke-width="1.600"/></svg>
        <div class="mb-auto mt-[3px] h-[25px] w-full bg-[#c8c8c8]"></div>
        <svg width="9" height="7"><path d="M1 2l3.500 3.500L8 2" fill="none" stroke="#444" stroke-width="1.600"/></svg>
      </div>
    </div>
  </div>
  <div class="relative ml-[11px] mt-[24px] h-[93px] w-[626px] border border-[#dcdcdc]">
    <span class="absolute -top-[9px] left-[6px] bg-[#f0f0f0] px-px">手工算量</span>
    <div class="ml-[3px] mt-[10px] h-[44px] w-[610px] border border-[#777] bg-white"></div>
    <div class="mt-[7px] flex items-start pl-[10px]">
      <button class="h-[23px] w-[88px] border border-[#aaa] bg-[#e1e1e1]">重新输入<i>(R)</i></button>
      <span class="ml-[23px] mt-[3px] w-[86px]">手工算量结果<i>=</i></span>
      <div class="mt-[2px] h-[20px] w-[406px] border border-[#777] bg-[#ffffe0]"></div>
    </div>
  </div>
  <div class="ml-[12px] mt-[13px] flex">
    <button class="h-[23px] w-[106px] border border-[#aaa] bg-[#e1e1e1]">查看计算规则<i>(I)</i></button>
    <button class="ml-[18px] h-[23px] w-[113px] border border-[#aaa] bg-[#e1e1e1]">查看三维扣减图<i>(T)</i></button>
    <button class="ml-[18px] h-[23px] w-[108px] border border-[#aaa] bg-[#e1e1e1]">显示详细计算式</button>
    <button class="ml-[188px] h-[23px] w-[72px] border-2 border-[#0078d7] bg-[#e1e1e1]">关闭<i>(C)</i></button>
  </div>
</div>

<!-- red annotation rectangles -->
<div class="absolute left-[196px] top-[504px] h-[30px] w-[180px] border border-[#f03030]"></div>
<div class="absolute left-[322px] top-[537px] h-[14px] w-[59px] border border-[#f03030]"></div>
<div class="absolute left-[208px] top-[124px] h-[17px] w-[212px] border border-[#f03030]"></div>
</body></html>
